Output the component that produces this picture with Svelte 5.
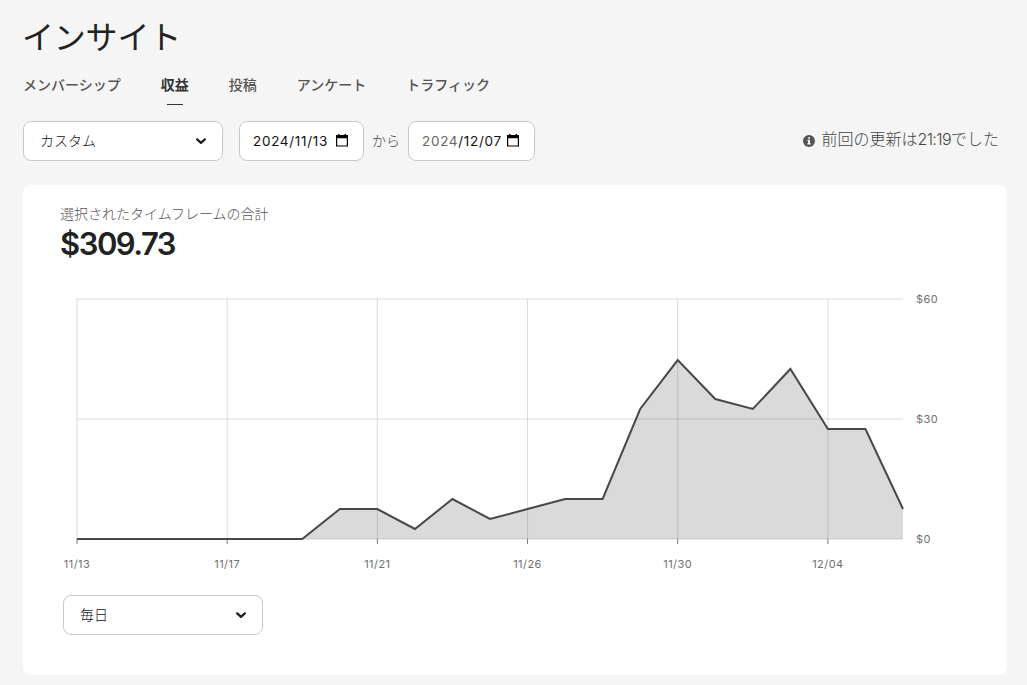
<script lang="ts">
	type Day = { date: string; amount: number };

	const tabs = ['メンバーシップ', '収益', '投稿', 'アンケート', 'トラフィック'];
	let activeTab = $state('収益');
	let timeframe = $state('カスタム');
	let interval = $state('毎日');

	const amounts = [
		0, 0, 0, 0, 0, 0, 0, 7.5, 7.5, 2.5, 10, 5, 7.5, 10, 10, 32.5, 44.73, 35, 32.5, 42.5, 27.5,
		27.5, 7.5
	];
	const labels: Record<number, string> = {
		0: '11/13',
		4: '11/17',
		8: '11/21',
		12: '11/26',
		16: '11/30',
		20: '12/04'
	};
	const days: Day[] = amounts.map((amount, i) => ({ date: labels[i] ?? '', amount }));
	const total = $derived(days.reduce((sum, day) => sum + day.amount, 0));

	// chart geometry
	const left = 16;
	const top = 10;
	const width = 826;
	const height = 240;
	const max = 60;
	const bottom = top + height;
	const yTicks = [60, 30, 0];

	const x = (i: number) => left + (i * width) / (days.length - 1);
	const y = (amount: number) => bottom - (amount / max) * height;

	const line = days.map((day, i) => `${i ? 'L' : 'M'}${x(i)},${y(day.amount)}`).join('');
	const area = `${line}L${left + width},${bottom}L${left},${bottom}Z`;
</script>

{#snippet chevron()}
	<svg class="chevron" width="12" height="8" viewBox="0 0 12 8" aria-hidden="true">
		<path d="M2.2 2.4l3.8 3.4 3.8-3.4" />
	</svg>
{/snippet}

{#snippet calendar()}
	<svg class="calendar" width="12" height="13" viewBox="0 0 12 13" aria-hidden="true">
		<path d="M2 0h1.5v1h5V0H10v1h2v11.6H0V1h2zM1.2 4.3v7.1h9.6V4.3z" fill-rule="evenodd" />
	</svg>
{/snippet}

<main class="page">
	<h1>インサイト</h1>

	<nav class="tabs">
		{#each tabs as tab}
			<button
				type="button"
				class="tab"
				class:active={tab === activeTab}
				onclick={() => (activeTab = tab)}
			>
				{tab}
			</button>
		{/each}
	</nav>

	<div class="filters">
		<button type="button" class="field select">
			<span>{timeframe}</span>
			{@render chevron()}
		</button>
		<button type="button" class="field date from">
			<span>2024/11/13</span>
			{@render calendar()}
		</button>
		<span class="separator">から</span>
		<button type="button" class="field date to">
			<span><span class="muted">2024</span>/12/07</span>
			{@render calendar()}
		</button>
		<p class="updated">
			<svg width="12" height="12" viewBox="0 0 12 12" aria-hidden="true">
				<circle cx="6" cy="6" r="6" fill="#555" />
				<path d="M5 2.2h2v1.6H5zM4.4 4.8H7v3.4h.7v1.3H4.3V8.2H5V6h-.6z" fill="#f5f5f5" />
			</svg>
			<span>前回の更新は<span class="time">21:19</span>でした</span>
		</p>
	</div>

	<section class="card">
		<p class="caption">選択されたタイムフレームの合計</p>
		<p class="total">${total.toFixed(2)}</p>

		<svg class="chart" width="908" height="300" viewBox="0 0 908 300">
			{#each yTicks as tick}
				<line class="grid" x1={left} x2={left + width} y1={y(tick)} y2={y(tick)} />
				<text x="855" y={y(tick) + 4}>${tick}</text>
			{/each}
			{#each days as day, i}
				{#if day.date}
					<line class="grid" x1={x(i)} x2={x(i)} y1={top} y2={bottom} />
					<line class="tick" x1={x(i)} x2={x(i)} y1={bottom} y2={bottom + 5} />
					<text x={x(i)} y={bottom + 29} text-anchor="middle">{day.date}</text>
				{/if}
			{/each}
			<path class="area" d={area} />
			<path class="line" d={line} />
		</svg>

		<button type="button" class="field select">
			<span>{interval}</span>
			{@render chevron()}
		</button>
	</section>
</main>

<style>
	:global(body) {
		background: #f5f5f5;
	}

	.page {
		box-sizing: border-box;
		height: 685px;
		padding: 15px 20px 0 23px;
		overflow: hidden;
		color: #222;
		font-family: Inter, 'Noto Sans CJK JP', sans-serif;
		font-size: 14px;
		font-weight: 300;
	}

	h1,
	p {
		margin: 0;
		font-weight: 300;
	}

	h1 {
		margin-left: -1px;
		font-size: 32px;
		font-weight: 400;
		letter-spacing: -0.2px;
		line-height: 46px;
	}

	.tabs {
		display: flex;
		gap: 40px;
		height: 45px;
		margin-top: 13px;
	}

	.tab {
		display: flex;
		flex-direction: column;
		align-items: center;
		height: 31px;
		padding: 0;
		border: 0;
		background: none;
		color: #555;
		font: inherit;
		font-weight: 500;
		line-height: 22px;
		white-space: nowrap;
	}

	.tab.active {
		color: #333;
		font-weight: 700;
	}

	.tab.active::after {
		content: '';
		width: 16px;
		height: 1px;
		margin-top: 8px;
		background: #333;
	}

	.filters {
		display: flex;
		align-items: center;
		margin-top: 2px;
	}

	.field {
		display: flex;
		align-items: center;
		box-sizing: border-box;
		height: 40px;
		border: 1px solid #c8c8c8;
		border-radius: 8px;
		background: #fff;
		color: #111;
		font: inherit;
	}

	.select {
		justify-content: space-between;
		width: 200px;
		padding: 0 15px 2px 16px;
	}

	.chevron {
		margin-top: 2px;
		fill: none;
		stroke: #222;
		stroke-width: 2.4;
		stroke-linecap: round;
		stroke-linejoin: round;
	}

	.date {
		justify-content: space-between;
		padding: 0 15px 1px 13px;
		font-size: 13.5px;
		font-weight: 400;
		letter-spacing: 0.7px;
	}

	.from {
		width: 125px;
		margin-left: 16px;
	}

	.to {
		width: 127px;
	}

	.muted {
		color: #666;
	}

	.separator {
		width: 28px;
		margin: -2px 8px 0;
		color: #444;
	}

	.updated {
		display: flex;
		align-items: center;
		gap: 6px;
		margin: -7px 8px 0 auto;
		color: #444;
		font-size: 16px;
	}

	.updated svg {
		margin-top: 6px;
	}

	.time {
		letter-spacing: -0.6px;
	}

	.card {
		box-sizing: border-box;
		height: 490px;
		margin-top: 24px;
		padding: 18px 38px 0;
		border-radius: 8px;
		background: #fff;
	}

	.caption {
		margin-left: -1px;
		color: #555;
		line-height: 22px;
	}

	.total {
		margin-left: -1px;
		font-size: 31px;
		font-weight: 600;
		letter-spacing: -1.5px;
		line-height: 38px;
	}

	.chart {
		display: block;
		margin-top: 26px;
	}

	.chart text {
		fill: #707070;
		font-size: 11px;
		font-weight: 400;
		letter-spacing: 0.45px;
	}

	.grid {
		stroke: rgba(0, 0, 0, 0.14);
	}

	.tick {
		stroke: #777;
	}

	.area {
		fill: rgba(70, 70, 70, 0.2);
	}

	.line {
		fill: none;
		stroke: #484848;
		stroke-width: 2;
	}

	.card .select {
		margin: 6px 0 0 2px;
	}
</style>
